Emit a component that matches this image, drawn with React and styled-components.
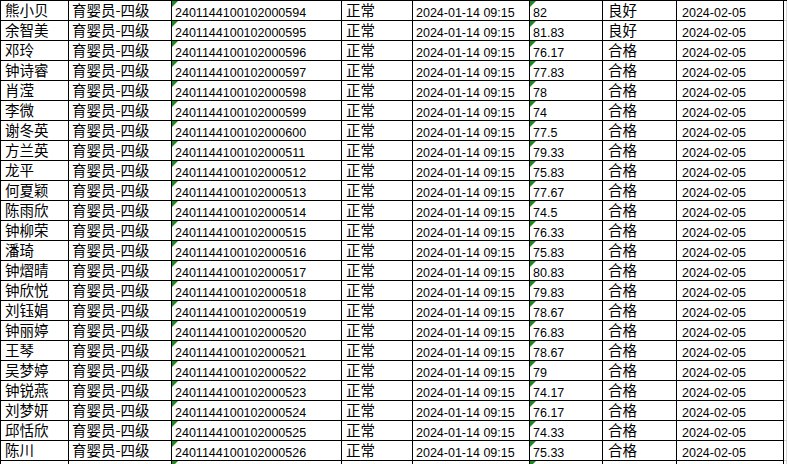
import React from 'react'
import styled, { createGlobalStyle } from 'styled-components'

const GlobalStyle = createGlobalStyle`
html, body {
    margin: 0;
    padding: 0;
    background: #ffffff;
    overflow: hidden;
}
`

const PREFIX = '2401144100102000'

const rows = [
    ['熊小贝', '594', '82', '良好'],
    ['余智美', '595', '81.83', '良好'],
    ['邓玲', '596', '76.17', '合格'],
    ['钟诗睿', '597', '77.83', '合格'],
    ['肖滢', '598', '78', '合格'],
    ['李微', '599', '74', '合格'],
    ['谢冬英', '600', '77.5', '合格'],
    ['方兰英', '511', '79.33', '合格'],
    ['龙平', '512', '75.83', '合格'],
    ['何夏颖', '513', '77.67', '合格'],
    ['陈雨欣', '514', '74.5', '合格'],
    ['钟柳荣', '515', '76.33', '合格'],
    ['潘琦', '516', '75.83', '合格'],
    ['钟熠晴', '517', '80.83', '合格'],
    ['钟欣悦', '518', '79.83', '合格'],
    ['刘钰娟', '519', '78.67', '合格'],
    ['钟丽婷', '520', '76.83', '合格'],
    ['王琴', '521', '78.67', '合格'],
    ['吴梦婷', '522', '79', '合格'],
    ['钟锐燕', '523', '74.17', '合格'],
    ['刘梦妍', '524', '76.17', '合格'],
    ['邱恬欣', '525', '74.33', '合格'],
    ['陈川', '526', '75.33', '合格'],
]

function App() {
    return (
        <>
            <GlobalStyle />
            <Sheet>
                {rows.map(([name, id, score, grade]) => (
                    <Row key={id}>
                        <Cell $cjk>{name}</Cell>
                        <Cell $cjk>育婴员-四级</Cell>
                        <Cell $flag>{PREFIX + id}</Cell>
                        <Cell $cjk $pad={4}>正常</Cell>
                        <Cell>2024-01-14 09:15</Cell>
                        <Cell $flag>{score}</Cell>
                        <Cell $cjk $pad={5}>{grade}</Cell>
                        <Cell $pad={5}>2024-02-05</Cell>
                        <Spare />
                    </Row>
                ))}
                <Row>
                    <Cell />
                    <Cell />
                    <Cell $flag />
                    <Cell />
                    <Cell />
                    <Cell $flag />
                    <Cell />
                    <Cell />
                    <Spare />
                </Row>
            </Sheet>
        </>
    )
}

export default App

const Sheet = styled.div`
width: 787px;
height: 464px;
overflow: hidden;
border-top: 1px solid #000;
`

const Row = styled.div`
display: grid;
grid-template-columns: 69px 103px 170px 71px 117px 73px 74px 107px 1fr;
height: 20px;
`

const Cell = styled.div`
position: relative;
box-sizing: border-box;
display: flex;
align-items: flex-end;
height: 20px;
padding-left: ${p => p.$pad ?? 3}px;
padding-bottom: ${p => p.$cjk ? 3 : 1}px;
border-right: 1px solid #000;
border-bottom: 1px solid #000;
&:first-child {
    border-left: 1px solid #000;
    padding-left: 4px;
}
white-space: nowrap;
color: #000;
font-family: ${p => p.$cjk ? '"Noto Sans CJK SC", sans-serif' : '"Liberation Sans", "Noto Sans CJK SC", sans-serif'};
font-size: ${p => p.$cjk ? '14.5px' : '12.5px'};
line-height: ${p => p.$cjk ? '15px' : '12px'};
&::before {
    content: '';
    display: ${p => p.$flag ? 'block' : 'none'};
    position: absolute;
    left: 0;
    top: 0;
    width: 0;
    height: 0;
    border-top: 6px solid #1e8a1e;
    border-right: 6px solid transparent;
}
`

const Spare = styled.div`
box-sizing: border-box;
height: 20px;
border-right: 1px solid #d4d4d4;
border-bottom: 1px solid #d4d4d4;
`
